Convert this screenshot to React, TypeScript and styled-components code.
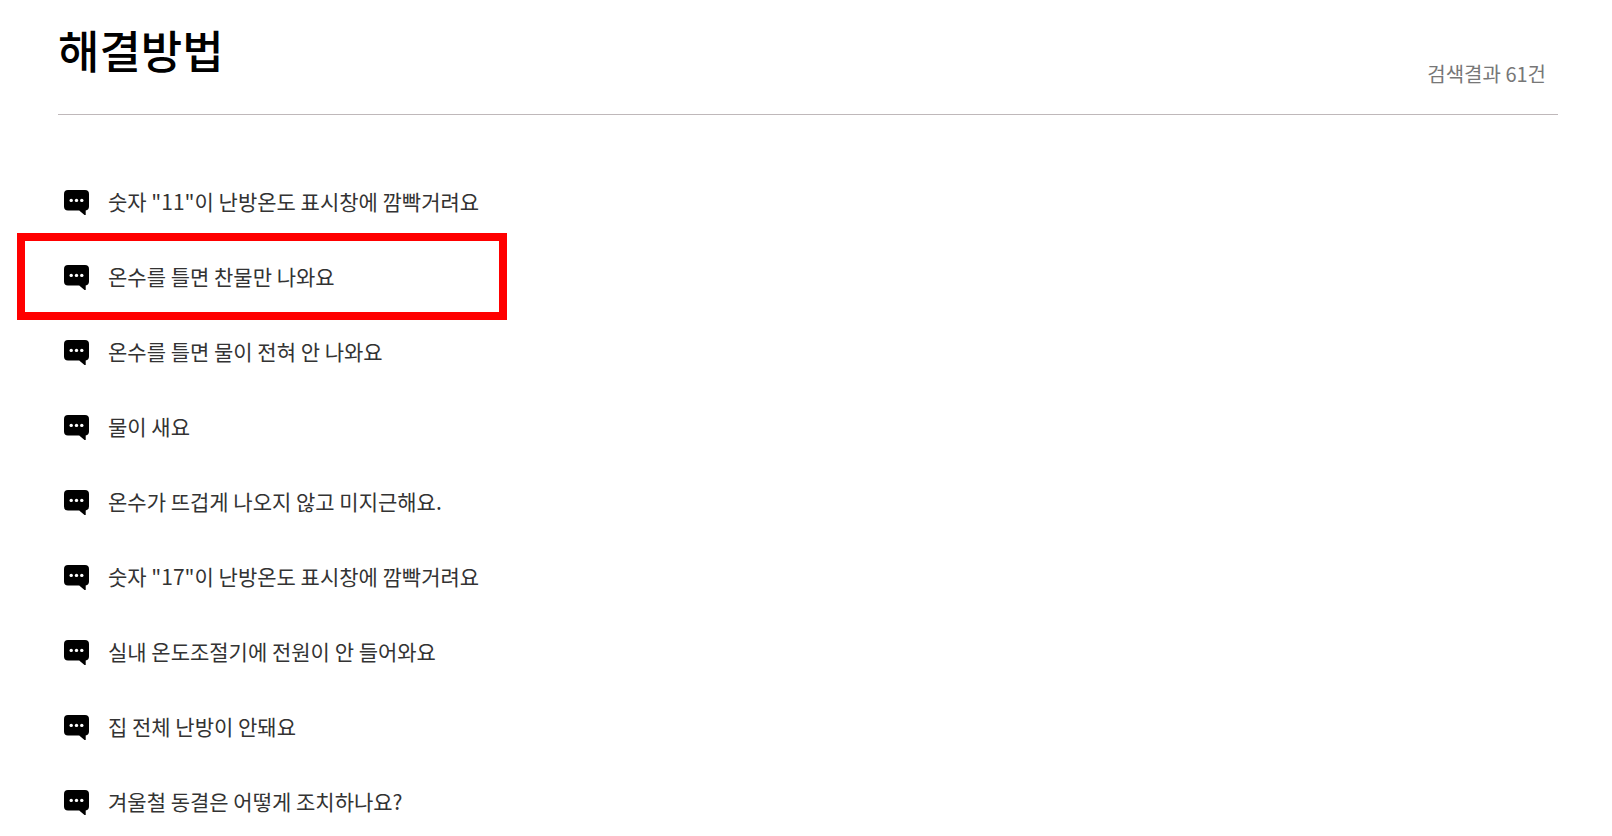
import React from "react";
import styled, { createGlobalStyle } from "styled-components";

const GlobalStyle = createGlobalStyle`
  *, *::before, *::after { box-sizing: border-box; }
  body {
    margin: 0;
    background: #fff;
    color: #333;
    font-family: "Noto Sans CJK KR", sans-serif;
  }
`;

const Page = styled.main`
  padding: 18px 54px 0 58px;
`;

const Header = styled.header`
  display: flex;
  justify-content: space-between;
  align-items: flex-end;
  padding: 0 12px 24px 0;
  border-bottom: 1px solid #bfb8ba;
`;

const Title = styled.h1`
  margin: 0;
  padding-bottom: 8px;
  font-size: 45px;
  font-weight: 500;
  line-height: 64px;
  color: #000;
`;

const Count = styled.p`
  margin: 0;
  font-size: 20px;
  line-height: 32px;
  color: #777;
`;

const List = styled.ul`
  list-style: none;
  margin: 0;
  padding: 50px 0 0;
`;

const Item = styled.li`
  height: 75px;
  display: flex;
  align-items: center;
`;

const ItemLink = styled.a`
  position: relative;
  display: flex;
  align-items: center;
  gap: 19px;
  padding-left: 6px;
  color: inherit;
  font-size: 21px;
  line-height: 31px;
  text-decoration: none;
`;

const Label = styled.span`
  padding-bottom: 2px;
`;

const Mark = styled.span`
  position: absolute;
  left: -41px;
  top: -28px;
  width: 490px;
  height: 87px;
  border: 8px solid #f00;
`;

const BubbleIcon = () => (
  <svg width="25" height="25" viewBox="0 0 25 25" aria-hidden="true">
    <path d="M4 0h17a4 4 0 0 1 4 4v12.500a4 4 0 0 1-3.300 3.900V25h-1.200L15.200 20.500H4a4 4 0 0 1-4-4V4a4 4 0 0 1 4-4z" fill="#000" />
    <circle cx="7.200" cy="10.400" r="1.700" fill="#fff" />
    <circle cx="12.500" cy="10.400" r="1.700" fill="#fff" />
    <circle cx="17.800" cy="10.400" r="1.700" fill="#fff" />
  </svg>
);

const solutions = [
  { text: '숫자 "11"이 난방온도 표시창에 깜빡거려요' },
  { text: "온수를 틀면 찬물만 나와요", marked: true },
  { text: "온수를 틀면 물이 전혀 안 나와요" },
  { text: "물이 새요" },
  { text: "온수가 뜨겁게 나오지 않고 미지근해요." },
  { text: '숫자 "17"이 난방온도 표시창에 깜빡거려요' },
  { text: "실내 온도조절기에 전원이 안 들어와요" },
  { text: "집 전체 난방이 안돼요" },
  { text: "겨울철 동결은 어떻게 조치하나요?" },
];

export default function App() {
  return (
    <>
      <GlobalStyle />
      <Page>
        <Header>
          <Title>해결방법</Title>
          <Count>검색결과 61건</Count>
        </Header>
        <List>
          {solutions.map((s) => (
            <Item key={s.text}>
              <ItemLink href="#">
                <BubbleIcon />
                <Label>{s.text}</Label>
                {s.marked && <Mark />}
              </ItemLink>
            </Item>
          ))}
        </List>
      </Page>
    </>
  );
}
